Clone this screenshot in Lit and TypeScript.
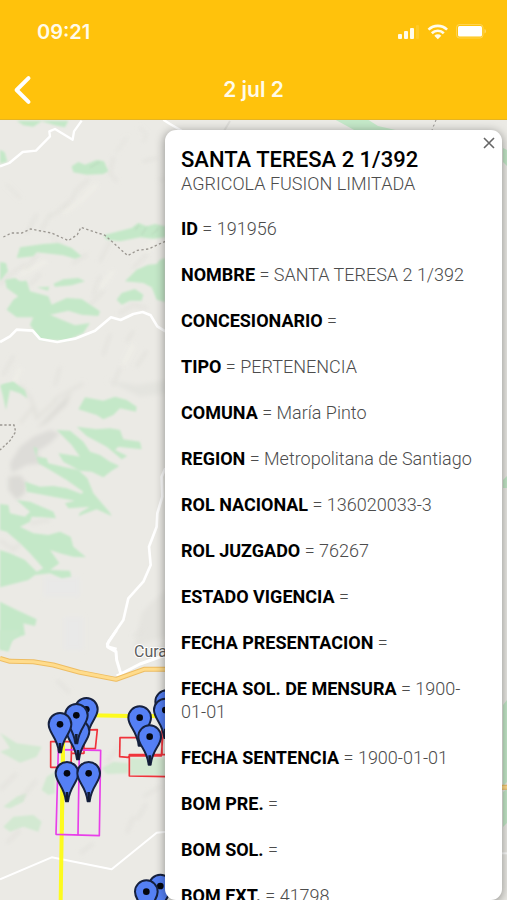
import { LitElement, html, svg, css } from "lit";
import { customElement } from "lit/decorators.js";

interface Field {
  label: string;
  value: string;
}

const FIELDS: Field[] = [
  { label: "ID", value: "191956" },
  { label: "NOMBRE", value: "SANTA TERESA 2 1/392" },
  { label: "CONCESIONARIO", value: "" },
  { label: "TIPO", value: "PERTENENCIA" },
  { label: "COMUNA", value: "María Pinto" },
  { label: "REGION", value: "Metropolitana de Santiago" },
  { label: "ROL NACIONAL", value: "136020033-3" },
  { label: "ROL JUZGADO", value: "76267" },
  { label: "ESTADO VIGENCIA", value: "" },
  { label: "FECHA PRESENTACION", value: "" },
  { label: "FECHA SOL. DE MENSURA", value: "1900-01-01" },
  { label: "FECHA SENTENCIA", value: "1900-01-01" },
  { label: "BOM PRE.", value: "" },
  { label: "BOM SOL.", value: "" },
  { label: "BOM EXT.", value: "41798" },
];

// Marker heads, in map units (three per pixel), back to front.
const PINS: [number, number][] = [
  [259, 238],
  [234, 304],
  [229, 256],
  [180, 283],
  [201, 430],
  [266, 430],
  [500, 215],
  [496, 240],
  [419, 263],
  [449, 320],
  [481, 768],
  [439, 785],
];

@customElement("status-bar")
export class StatusBar extends LitElement {
  static styles = css`
    :host {
      display: flex;
      justify-content: space-between;
      align-items: center;
      height: 64px;
      padding: 0 20px 0 37px;
      color: #fffbea;
      font: 600 20px/24px Inter, sans-serif;
    }
    .icons {
      display: block;
    }
  `;
  render() {
    return html`
      <time>09:21</time>
      <svg class="icons" width="92" height="20" viewBox="0 0 92 20" fill="currentColor" aria-hidden="true">
        <rect x="3" y="12" width="4" height="5" rx="1" />
        <rect x="9" y="9" width="4" height="8" rx="1" />
        <rect x="15" y="6" width="4" height="11" rx="1" />
        <rect x="21" y="3" width="3" height="14" rx="1" opacity=".12" />
        <g fill="none" stroke="currentColor" stroke-width="2.6">
          <path d="M33.500 7.600a13.500 13.500 0 0 1 18.600 0" />
          <path d="M36.800 11.200a8.600 8.600 0 0 1 12 0" />
        </g>
        <path d="M39.300 13.700a5 5 0 0 1 7 0L42.800 17.200Z" />
        <rect x="61.500" y="2.500" width="26.500" height="13.500" rx="3" fill="none" stroke="currentColor" opacity=".3" />
        <rect x="63" y="4" width="24" height="10.500" rx="1.500" fill="#fff" />
        <path d="M89.500 7v4.500q1.500-.6 1.500-2.250T89.500 7" opacity=".4" />
      </svg>
    `;
  }
}

@customElement("nav-bar")
export class NavBar extends LitElement {
  static styles = css`
    :host {
      display: grid;
      grid-template-columns: 48px 1fr 48px;
      align-items: center;
      height: 55px;
      padding-bottom: 4px;
      box-sizing: border-box;
      color: #fffbea;
    }
    .back {
      display: flex;
      align-items: center;
      height: 44px;
      padding: 0 0 0 12px;
      border: 0;
      background: none;
      color: #fff;
      cursor: pointer;
    }
    .title {
      margin: 0;
      text-align: center;
      font: 600 21px/28px Inter, sans-serif;
    }
  `;
  render() {
    return html`
      <button class="back" aria-label="Volver">
        <svg width="22" height="30" viewBox="0 0 22 30" fill="none" stroke="currentColor" stroke-width="4" stroke-linecap="round" stroke-linejoin="round">
          <path d="M16.500 3.200 4.600 15l11.900 11.800" />
        </svg>
      </button>
      <h1 class="title">2 jul 2</h1>
    `;
  }
}

@customElement("terrain-map")
export class TerrainMap extends LitElement {
  static styles = css`
    :host {
      display: block;
      overflow: hidden;
    }
    .canvas {
      display: block;
      width: 100%;
      height: 100%;
    }
    .place {
      font: 400 48px Roboto, sans-serif;
      fill: #5e5e5e;
      stroke: #fff;
      stroke-width: 6px;
      paint-order: stroke;
    }
  `;

  private pin([x, y]: [number, number]) {
    return svg`<g transform="translate(${x} ${y})">
      <path d="M-34 0A34 34 0 0 1 34 0C34 27 8 38 3 84H-3C-8 38-34 27-34 0Z" fill="#5580f5" stroke="#16213f" stroke-width="6" stroke-linejoin="round" />
      <path d="M-4 56H4L3 84H-3Z" fill="#111a30" />
      <circle r="10" fill="#05070f" />
    </g>`;
  }

  private relief() {
    return svg`
      <g filter="url(#soft)" fill="none" stroke="#dcdbd6" stroke-width="8" stroke-linecap="round" opacity=".55">
        <path d="M265 185 230 215 215 245 185 270M205 262 150 295M110 290 80 345M150 290 125 335M340 120 330 165 350 190M430 130 470 120M480 185h12" />
        <path d="M75 440 30 470 0 500M110 410 80 455M260 410 220 435M300 475 280 530M310 520 270 560M120 470 90 500M330 370 300 430M440 410 400 450" />
        <path d="M360 585 400 560 440 570M40 715 10 770M180 750 165 800M330 650 310 710M360 750 340 800M440 700 410 745M400 640 380 670" />
        <path d="M420 30 440 50 430 70M380 60 350 100M20 200 60 240M150 350 190 390" stroke="#e1e0db" />
      </g>
      <g filter="url(#soft)" fill="none" stroke="#f3f2ea" stroke-width="10" opacity=".7">
        <path d="M290 200 240 250 190 285M340 460 300 510M140 430 60 470M400 680 370 740M470 360 440 400M60 750 40 800" />
      </g>`;
  }

  private reliefMiddle() {
    return svg`
      <g filter="url(#soft)">
        <path d="M100 170 60 200 30 250 35 280 80 255 130 250 110 215 150 190 180 160 150 150Z" fill="#dddcd8" />
        <path d="M25 290 60 285 80 310 75 340 50 360 25 330Z" fill="#dbdad6" />
        <path d="M215 35 180 70 110 145 140 130 200 75Z" fill="#deddd8" />
        <path d="M170 60 110 115 100 80 60 130" fill="none" stroke="#e2e1db" stroke-width="8" />
        <path d="M60 15 90 50 110 100M250 10 160 60M0 480 40 510 60 490M90 430 150 420" fill="none" stroke="#e3e2dd" stroke-width="9" />
        <path d="M425 700 450 670 500 630V770L430 790 400 810Z" fill="#e5e4df" />
        <path d="M130 590h110v60H130zM190 710h60v100h-60z" fill="#e8e8ea" opacity=".6" />
        <path d="M320 0 410 15 500 0V40L420 50Z" fill="#e4e4df" />
      </g>`;
  }

  private vegetation() {
    return svg`
      <g fill="#c4e8c8" filter="url(#edge)">
        <path d="M50 8h155l-10 20-30-6-40-12-25 16-30-4ZM0 95l14 8 8 28-22 6Z" />
        <path d="M215 145 235 132 255 140 290 126 312 130 325 160 310 168 260 170 220 163Z" />
        <path d="M310 352 395 330 415 315 440 325 465 318 496 325V358L460 362 420 358 360 370 320 365Z" />
        <path d="M55 405 60 388 130 378 175 375 215 390 245 415 225 422 190 412 110 403 100 415 50 420Z" />
        <path d="M160 498 190 484 235 480 255 490 215 502 165 506ZM110 508l38-2-4 12Z" />
        <path d="M0 432 18 435 24 460 0 490ZM15 485 45 480 60 490 80 488 90 520 145 535 155 560 200 540 245 543 300 580 295 594 245 590 205 578 150 590 185 605 225 622 270 615 250 645 200 668 120 665 90 620 100 598 50 598 20 575 40 545 55 535 20 510Z" />
        <path d="M375 490 410 455 445 440 470 438 480 425 496 420V552L470 545 455 508 430 495ZM350 545 365 525 405 513 430 530 425 548 390 548 365 560Z" />
        <path d="M10 800l30-6 12 16H10Z" />
      </g>
      <g fill="none" stroke="#b9d9bc" stroke-width="4" opacity=".8" filter="url(#edge)">
        <path d="M425 350 440 328M405 335 418 322M270 148 300 132M455 350 475 332" />
      </g>`;
  }

  private vegetationMiddle() {
    return svg`
      <g fill="#c4e8c8" filter="url(#edge)">
        <path d="M0 15 40 5 75 30 82 55 60 40 30 30 18 90 8 45Z" />
        <path d="M235 88 255 52 310 62 345 50 380 60 410 80 408 95 360 85 340 105 310 118 290 105Z" />
        <path d="M170 150 210 152 250 185 270 215 300 225 330 245 358 258 335 272 310 292 275 275 240 272 190 245 175 220 210 225 240 230 215 195ZM230 140 290 148 330 145 360 150 370 178 420 185 425 208 395 205 355 200 345 210 382 228 365 238 320 200 260 168Z" />
        <path d="M100 200 112 205 110 230 140 235 145 250 195 262 235 270 262 295 280 340 330 398 335 408 290 388 235 408 240 398 270 380 205 385 195 370 225 362 160 350 80 335 75 305 120 320 160 318 200 325 245 342 250 335 200 300 150 270 115 250Z" />
        <path d="M50 360 90 365 160 395 168 415 130 412 95 410 90 425 60 440 100 460 145 465 180 455 212 470 220 500 258 532 220 530 180 520 150 510 178 550 150 570 210 572 214 590 185 595 150 580 105 585 85 600 0 622V510L30 520 75 540 110 575 130 565 90 520 60 490 20 455 0 450V372L25 375 30 400 75 410 90 395Z" />
        <path d="M0 665 50 690 110 718 105 738 70 730 75 765 40 775 25 810H0Z" />
      </g>`;
  }

  private vegetationLower() {
    return svg`
      <g fill="#d3e9d2" filter="url(#edge)">
        <path d="M0 0H60L55 20 30 35 25 65 0 55Z" fill="#c8e8cb" />
        <path d="M0 308 50 340 125 350 110 380 60 398 0 365 30 355Z" />
        <path d="M125 480 140 440 165 425V490L145 495ZM305 415 340 395 385 400V430L320 432ZM390 385H496V438L390 435Z" />
        <path d="M10 530 50 500 80 490 70 515 30 535ZM10 590 40 560 100 555 125 575 115 605 70 590 30 605Z" />
      </g>
      <g filter="url(#soft)" fill="none" stroke="#deddd8" stroke-width="10" opacity=".55">
        <path d="M360 340 320 400M400 560 380 610M440 520 410 570M480 470 430 500M0 480 50 430M170 150 210 190M110 450 60 510M240 670 280 640M20 640 60 600" />
        <path d="M400 20 430 0M440 90 500 40" stroke="#e2e1dc" />
      </g>`;
  }

  render() {
    return html`
      <svg class="canvas" viewBox="0 120 507 780" preserveAspectRatio="xMinYMin slice" role="img" aria-label="Mapa">
        <defs>
          <filter id="soft" x="-10%" y="-10%" width="120%" height="120%"><feGaussianBlur stdDeviation="6" /></filter>
          <filter id="edge"><feGaussianBlur stdDeviation="3" /></filter>
        </defs>
        <rect y="120" width="507" height="780" fill="#ebeae5" />
        <g transform="translate(0 118) scale(.333333)">
          ${this.relief()} ${this.vegetation()}
        </g>
        <g transform="translate(0 380) scale(.333333)">
          ${this.reliefMiddle()} ${this.vegetationMiddle()}
        </g>
        <g transform="translate(0 630) scale(.333333)">${this.vegetationLower()}</g>

        <g fill="#c4e8c8">
          <path d="M334 119H367L378 126 400 131H356Z" />
          <path d="M503 148l4 2v16l-4-4ZM503 480l4-4v12h-4ZM503 705l4-5v82l-4 4ZM503 792l4-3v34l-4 4Z" />
        </g>
        <path d="M230 121 224 131" fill="none" stroke="#dddcd7" stroke-width="2" />
        <path d="M436 120l-4 10" fill="none" stroke="#8f8c88" stroke-dasharray="2 3" />

        <g transform="translate(0 118) scale(.333333)" fill="none">
          <path d="M0 145 28 135 68 102 108 98 150 55 148 40 165 33 218 65 222 40 245 8M490 5 510 18 545 38" stroke="#fff" stroke-width="7" stroke-linejoin="round" />
          <path d="M0 672 30 655 50 635 98 638 120 663 172 672 225 662 285 638 333 598 362 606 400 588 428 582 452 592 472 625 496 640" stroke="#fff" stroke-width="8" stroke-linejoin="round" />
          <path d="M10 357 35 345 65 345 92 333 155 345 205 368 232 350 243 328 315 352 383 413 412 397 445 393 496 370" stroke="#9b9791" stroke-width="4" stroke-dasharray="7 7" />
        </g>
        <g transform="translate(0 380) scale(.333333)" fill="none">
          <path d="M0 135H42L47 155 30 182 0 210" stroke="#9b9791" stroke-width="4" stroke-dasharray="7 6" />
          <path d="M496 265 485 290 487 350 472 400 470 440 447 500 452 555 430 605 385 655 370 720 325 785 322 800 350 807" stroke="#fff" stroke-width="8" stroke-linejoin="round" />
        </g>
        <g transform="translate(0 630) scale(.333333)" fill="none" stroke-linejoin="round">
          <path d="M350 0 322 42 325 52 348 65 350 90 362 130M350 138 420 102 496 75" stroke="#fff" stroke-width="9" />
          <path d="M0 748 155 682 335 718 470 608 500 605" stroke="#fff" stroke-width="6" />
          <path d="M0 85 30 94 100 95 160 105 240 127 348 148 432 118H510M1506 472h20" stroke="#eebd62" stroke-width="15" />
          <path d="M0 85 30 94 100 95 160 105 240 127 348 148 432 118H510M1506 472h20" stroke="#ffdc8c" stroke-width="9" />
          <path d="M1506 670h20" stroke="#fff" stroke-width="6" />
          <text class="place" x="402" y="80">Cura</text>

          <path d="M270 256 390 258H496M190 290 182 810" stroke="#fdfb1e" stroke-width="12" />
          <g stroke="#f0333b" stroke-width="5">
            <path d="M215 335H152V412H213ZM250 300 292 299 286 356H245M252 310V370H215M360 323H488L484 378H388L384 382 359 380ZM388 374H500V440L388 438ZM486 300V375" />
          </g>
          <path d="M175 359 302 361 298 617 168 613ZM238 360 234 615" stroke="#e83fe9" stroke-width="5" />
          <path d="M190 290 186 600" stroke="#fdfb1e" stroke-width="11" />
          ${PINS.map((p) => this.pin(p))}
        </g>
      </svg>
    `;
  }
}

@customElement("app-root")
export class AppRoot extends LitElement {
  static styles = css`
    :host {
      display: flex;
      flex-direction: column;
      height: 100vh;
      overflow: hidden;
      font-family: Roboto, sans-serif;
    }
    .header {
      flex: none;
      background: #ffc20c;
      border-bottom: 1px solid #e6b422;
    }
    .stage {
      flex: 1;
      min-height: 0;
      display: grid;
      grid-template: minmax(0, 1fr) / minmax(0, 1fr);
    }
    .map,
    .info {
      grid-area: 1 / 1;
    }
    .info {
      position: relative;
      justify-self: end;
      width: 68%;
      max-width: 337px;
      margin: 10px 5px 0 0;
      box-sizing: border-box;
      border-radius: 11px;
      background: #fff;
      box-shadow: 0 2px 10px 1px rgba(0, 0, 0, 0.35);
      overflow: hidden;
    }
    .scroll {
      height: 100%;
      box-sizing: border-box;
      padding: 17px 24px 0 16px;
      overflow-y: auto;
      scrollbar-width: none;
      color: #4c4c4c;
      font-size: 18px;
      font-weight: 300;
      line-height: 23px;
    }
    .name {
      margin: 0;
      color: #000;
      font-size: 22px;
      font-weight: 500;
      line-height: 25px;
      white-space: nowrap;
    }
    .owner {
      margin: 0;
    }
    .fields {
      display: flex;
      flex-direction: column;
      gap: 23px;
      margin: 22px 0 0;
    }
    .label,
    .value {
      display: inline;
      margin: 0;
    }
    .label {
      color: #000;
      font-weight: 700;
    }
    .close {
      position: absolute;
      top: 0;
      right: 0;
      display: flex;
      padding: 7px;
      border: 0;
      background: none;
      color: #666;
      cursor: pointer;
    }
  `;

  render() {
    return html`
      <header class="header">
        <status-bar></status-bar>
        <nav-bar></nav-bar>
      </header>
      <main class="stage">
        <terrain-map class="map"></terrain-map>
        <section class="info" aria-labelledby="name">
          <div class="scroll">
            <h2 class="name" id="name">SANTA TERESA 2 1/392</h2>
            <p class="owner">AGRICOLA FUSION LIMITADA</p>
            <dl class="fields">
              ${FIELDS.map(
                (f) => html`<div><dt class="label">${f.label}</dt><dd class="value"> = ${f.value}</dd></div>`
              )}
            </dl>
          </div>
          <button class="close" aria-label="Cerrar">
            <svg width="12" height="12" viewBox="0 0 12 12" fill="none" stroke="currentColor" stroke-width="1.600">
              <path d="M1 1 11 11M11 1 1 11" />
            </svg>
          </button>
        </section>
      </main>
    `;
  }
}
